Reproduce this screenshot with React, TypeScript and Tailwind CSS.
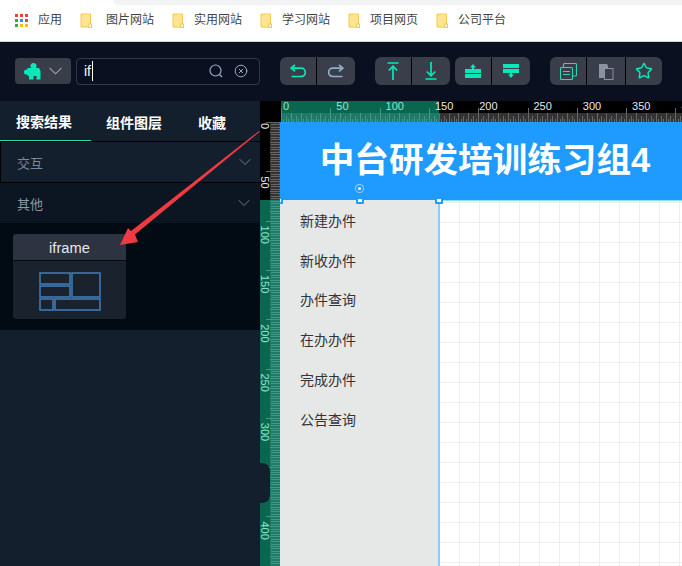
import { ChevronDown, CircleX, Star } from "lucide-react";

const bookmarks = ["图片网站", "实用网站", "学习网站", "项目网页", "公司平台"];
const menu = ["新建办件", "新收办件", "办件查询", "在办办件", "完成办件", "公告查询"];
const gridColors = ["#ea4335", "#ea4335", "#ea4335", "#34a853", "#4285f4", "#ea4335", "#34a853", "#fbbc05", "#fbbc05"];
const scale = 0.986;

function Folder() {
  return (
    <svg width="12" height="15" viewBox="0 0 12 15">
      <path d="M1 1h9.5v11H11v2H1z" fill="#ffe592" stroke="#efc94c" strokeWidth="1" />
      <rect x="9" y="11" width="2.5" height="3.5" fill="#fff" stroke="#efc94c" strokeWidth="1" />
    </svg>
  );
}

function BookmarkBar() {
  return (
    <div className="relative flex h-[42px] items-center border-b border-[#d4d6d9] bg-white pl-[15px] text-xs text-[#444]">
      <div className="absolute left-[113px] right-0 top-0 h-[5px] rounded-bl-lg bg-[#f1f3f4]" />
      <div className="grid w-[13px] grid-cols-3 gap-[2px]">
        {gridColors.map((c, i) => (
          <span key={i} className="h-[3px] w-[3px]" style={{ backgroundColor: c }} />
        ))}
      </div>
      <span className="ml-[10px] mr-[18px]">应用</span>
      {bookmarks.map((b, i) => (
        <div key={b} className={i === 0 ? "mr-[18px] flex items-center gap-[14px]" : "mr-[18px] flex items-center gap-[10px]"}>
          <Folder />
          <span>{b}</span>
        </div>
      ))}
    </div>
  );
}

function PuzzleIcon() {
  return (
    <svg width="17" height="17" viewBox="0 0 17 17" fill="#08e8b8">
      <circle cx="9.5" cy="3" r="3" />
      <circle cx="2.6" cy="9" r="2.6" />
      <path d="M3.5 5H15l1.5 3v5H3.5z" />
      <path d="M5 13h4.5v3.5H5zM12.5 13h4v3.5h-4z" />
    </svg>
  );
}

function UndoIcon({ color, flip }: { color: string; flip?: boolean }) {
  return (
    <svg className={flip ? "-scale-x-100" : ""} width="16" height="14" viewBox="0 0 16 14" fill="none" stroke={color} strokeWidth="1.7">
      <path d="M5 1L1.2 4.2 5 7.4" />
      <path d="M1.2 4.2h10a3.9 3.9 0 0 1 0 8.3H1.5" />
    </svg>
  );
}

function ArrowLineIcon({ down }: { down?: boolean }) {
  return (
    <svg className={down ? "-scale-y-100" : ""} width="12" height="18" viewBox="0 0 12 18" fill="none" stroke="#08e8b8" strokeWidth="1.7">
      <path d="M0.5 1h11" />
      <path d="M6 18V4.5" />
      <path d="M1.8 8.5L6 4.2l4.2 4.3" />
    </svg>
  );
}

function PasteIcon() {
  return (
    <svg width="16" height="17" viewBox="0 0 16 17">
      <path d="M1 1h8l1 2v3H7v9H1z" fill="#8b93a3" />
      <rect x="6.5" y="5.5" width="8.5" height="11" fill="#3a3e4a" stroke="#8b93a3" />
    </svg>
  );
}

function CopyIcon() {
  return (
    <svg width="17" height="17" viewBox="0 0 17 17" fill="none" stroke="#2fd6b0" strokeWidth="1.1">
      <rect x="0.5" y="4.5" width="12" height="12" rx="1" />
      <path d="M3.5 4V1.5a1 1 0 0 1 1-1h11a1 1 0 0 1 1 1V12a1 1 0 0 1-1 1h-2.5" />
      <path d="M3 8.5h7M3 11.5h7" />
    </svg>
  );
}

function MoveUpIcon() {
  return (
    <svg width="16" height="14" viewBox="0 0 16 14" fill="#08e8b8">
      <path d="M8 0l3 3.5H9V5h7v9H0V5h7V3.5H5z" />
      <rect x="0" y="9" width="16" height="1" fill="#3a3e4a" />
    </svg>
  );
}

function MoveDownIcon() {
  return (
    <svg width="16" height="14" viewBox="0 0 16 14" fill="#08e8b8">
      <path d="M0 0h16v9H9v1.5h2L8 14l-3-3.5h2V9H0z" />
      <rect x="0" y="4" width="16" height="1" fill="#3a3e4a" />
    </svg>
  );
}

function Toolbar() {
  return (
    <div className="flex h-[60px] items-center bg-[#0a101f] pl-[15px]">
      <div className="flex h-[26px] w-[56px] items-center gap-[8px] rounded bg-[#383d49] pl-[9px]">
        <PuzzleIcon />
        <svg width="13" height="8" viewBox="0 0 13 8" fill="none" stroke="#9aa7b8" strokeWidth="1.1">
          <path d="M0.5 0.8L6.5 6.8l6-6" />
        </svg>
      </div>
      <div className="ml-[5px] flex h-[27px] w-[184px] items-center rounded border border-[#33394a] pl-[7px] pr-[11px]">
        <span className="h-[20px] border-r border-white pr-px text-sm leading-5 text-white">if</span>
        <svg className="ml-auto" width="14" height="14" viewBox="0 0 14 14" fill="none" stroke="#8fb0cc" strokeWidth="1.2">
          <circle cx="6.5" cy="6.5" r="5.5" />
          <path d="M10.5 10.5l2.5 2.5" />
        </svg>
        <CircleX className="ml-[11px]" size={14} strokeWidth={1.6} color="#9fb0c4" />
      </div>
      <div className="ml-[20px] flex h-[28px] gap-px overflow-hidden rounded-md bg-black">
        <div className="flex w-[36px] items-center justify-center bg-[#3a3e4a]">
          <UndoIcon color="#08e8b8" />
        </div>
        <div className="flex w-[38px] items-center justify-center bg-[#3a3e4a]">
          <UndoIcon color="#8fb0cc" flip />
        </div>
      </div>
      <div className="ml-[20px] flex h-[28px] gap-px overflow-hidden rounded-md bg-black">
        <div className="flex w-[36px] items-center justify-center bg-[#3a3e4a]">
          <ArrowLineIcon />
        </div>
        <div className="flex w-[38px] items-center justify-center bg-[#3a3e4a]">
          <ArrowLineIcon down />
        </div>
      </div>
      <div className="ml-[5px] flex h-[28px] gap-px overflow-hidden rounded-md bg-black">
        <div className="flex w-[36px] items-center justify-center bg-[#3a3e4a]">
          <MoveUpIcon />
        </div>
        <div className="flex w-[38px] items-center justify-center bg-[#3a3e4a]">
          <MoveDownIcon />
        </div>
      </div>
      <div className="ml-[20px] flex h-[28px] gap-px overflow-hidden rounded-md bg-black">
        <div className="flex w-[36px] items-center justify-center bg-[#3a3e4a]">
          <CopyIcon />
        </div>
        <div className="flex w-[38px] items-center justify-center bg-[#3a3e4a]">
          <PasteIcon />
        </div>
        <div className="flex w-[36px] items-center justify-center bg-[#3a3e4a]">
          <Star size={18} strokeWidth={2} color="#08e8b8" />
        </div>
      </div>
    </div>
  );
}

function Sidebar() {
  return (
    <div className="w-[260px] shrink-0 bg-[#141f2e]">
      <div className="flex h-[41px] border-b border-black text-sm font-bold text-white">
        <div className="flex h-[40px] w-[91px] items-center border-b border-[#2fd6b0] pl-[16px] pt-[3px]">搜索结果</div>
        <div className="ml-[15px] flex h-[40px] items-center pt-[3px]">组件图层</div>
        <div className="ml-[36px] flex h-[40px] items-center pt-[3px]">收藏</div>
      </div>
      <div className="flex h-[41px] items-center justify-between border-b border-l border-black pl-[16px] pr-[5px] text-[13px] text-[#7a8794]">
        <span className="pt-[3px]">交互</span>
        <ChevronDown size={20} strokeWidth={0.9} color="#7f9ab5" />
      </div>
      <div className="flex h-[40px] items-center justify-between bg-[#0c1522] pl-[17px] pr-[6px] text-[13px] text-[#8a97a5]">
        <span className="pt-[3px]">其他</span>
        <ChevronDown size={20} strokeWidth={0.9} color="#7f9ab5" />
      </div>
      <div className="h-[107px] bg-[#020a13] pl-[13px] pt-[11px]">
        <div className="w-[113px] overflow-hidden rounded-[3px]">
          <div className="flex h-[26px] items-center justify-center bg-[#2d3340] pt-[2px] text-[14.7px] text-[#e8e8e8]">iframe</div>
          <div className="mt-px flex h-[58px] items-center justify-center bg-[#1a222e] pt-[2px]">
            <svg width="62" height="39" viewBox="0 0 62 39" fill="none" stroke="#3f79b3" strokeWidth="1.6">
              <rect x="1" y="1" width="30" height="11" />
              <rect x="1" y="14" width="30" height="11" />
              <rect x="33" y="1" width="28" height="24" />
              <rect x="1" y="27" width="13" height="11" />
              <rect x="16" y="27" width="45" height="11" />
            </svg>
          </div>
        </div>
      </div>
    </div>
  );
}

function RulerTop() {
  const ticks = Array.from({ length: 165 }, (_, i) => i * 2.5);
  const labels = [0, 50, 100, 150, 200, 250, 300, 350, 400];
  return (
    <svg className="block" width="401" height="21" viewBox="0 0 401 21">
      <rect width="401" height="21" fill="#000" />
      <rect width="158" height="21" fill="#0b6650" />
      <rect y="12" width="401" height="9" fill="#333" />
      <rect y="12" width="158" height="9" fill="#1e7a66" />
      {ticks.map((t) => {
        const x = Math.round(t * scale) + 0.5;
        const h = t % 50 === 0 ? 14 : t % 10 === 0 ? 9 : t % 5 === 0 ? 6 : 3;
        return <line key={t} x1={x} x2={x} y1={21 - h} y2={21} stroke={x < 158 ? "#3d9a83" : "#666"} strokeWidth="1" />;
      })}
      {labels.map((t) => (
        <text
          key={t}
          x={t * scale + (t === 0 ? 2 : t === 200 ? 1 : 6)}
          y={9}
          fontSize="11"
          fontFamily="Liberation Sans"
          fill={t < 150 ? "#8fe6cc" : "#e8e8e8"}
        >
          {t}
        </text>
      ))}
    </svg>
  );
}

function RulerLeft() {
  const ticks = Array.from({ length: 181 }, (_, i) => i * 2.5);
  const labels = [0, 50, 100, 150, 200, 250, 300, 350, 400];
  return (
    <svg className="block shrink-0" width="20" height="444" viewBox="0 0 20 444">
      <rect width="20" height="444" fill="#0b6650" />
      <rect width="20" height="78" fill="#000" />
      <rect x="10" width="10" height="444" fill="#1e7a66" />
      <rect x="10" width="10" height="78" fill="#333" />
      {ticks.map((t) => {
        const y = Math.round(t * scale) + 0.5;
        const w = t % 50 === 0 ? 14 : t % 10 === 0 ? 10 : 9;
        return <line key={t} x1={20 - w} x2={20} y1={y} y2={y} stroke={y < 78 ? "#666" : "#3d9a83"} strokeWidth="1" />;
      })}
      {labels.map((t) => {
        const y = t * scale + 5;
        return (
          <text key={t} transform={`translate(1 ${t === 0 ? 1 : y}) rotate(90)`} fontSize="11" fontFamily="Liberation Sans" fill={y < 78 ? "#e8e8e8" : "#8fe6cc"}>
            {t}
          </text>
        );
      })}
      <path d="M20 0v78" stroke="#f03a3a" strokeDasharray="2 2" />
    </svg>
  );
}

function Handle({ className }: { className: string }) {
  return <div className={`absolute h-[7px] rounded-[1px] border-2 border-[#1f9bff] bg-white ${className}`} />;
}

function Canvas() {
  return (
    <div className="flex min-w-0 flex-1 flex-col bg-black">
      <div className="ml-[21px] h-[21px]">
        <RulerTop />
      </div>
      <div className="relative flex flex-1">
        <RulerLeft />
        <div className="absolute left-0 top-[341px] h-[40px] w-[10px] rounded-r-lg bg-[#141f2e]" />
        <div className="relative flex min-w-0 flex-1 flex-col bg-white">
          <div className="flex h-[78px] items-center justify-center bg-[#1f9bff] pb-[1px] pl-[8px] text-[34.6px] font-bold text-white">
            中台研发培训练习组4
          </div>
          <div className="flex flex-1">
            <div className="w-[160px] border-r-2 border-[#93c9f5] bg-[#e6e8e7] pl-[20px] pt-[2px] text-sm leading-[39.7px] text-[#333]">
              {menu.map((m) => (
                <div key={m}>{m}</div>
              ))}
            </div>
            <div className="flex-1 border-t border-[#7fe6f5] bg-[linear-gradient(#eeeeee_1px,transparent_1px),linear-gradient(90deg,#eeeeee_1px,transparent_1px)] bg-[size:20px_20px] bg-[position:-1px_21px]" />
          </div>
          <Handle className="left-0 top-[75px] w-[3px] border-l-0" />
          <Handle className="left-[76px] top-[75px] w-[8px]" />
          <Handle className="left-[155px] top-[75px] w-[8px]" />
          <div className="absolute left-[76px] top-[63px] h-[7px] w-[7px] rounded-full border-2 border-[#1f9bff] bg-white ring-1 ring-[#8fd0ff]" />
        </div>
      </div>
    </div>
  );
}

export default function App() {
  return (
    <div className="relative flex h-[566px] w-[682px] flex-col overflow-hidden font-['Liberation_Sans','Noto_Sans_CJK_SC',sans-serif]">
      <BookmarkBar />
      <Toolbar />
      <div className="flex flex-1 bg-[#141f2e]">
        <Sidebar />
        <Canvas />
      </div>
      {/* red annotation arrow drawn over the screenshot */}
      <svg className="absolute left-0 top-0" width="682" height="566" viewBox="0 0 682 566">
        <path d="M260 131.5 L135 234.5 L138 242 L120 245 L128 228 L131 231 L259 131 Z" fill="#ef3a42" />
      </svg>
    </div>
  );
}
